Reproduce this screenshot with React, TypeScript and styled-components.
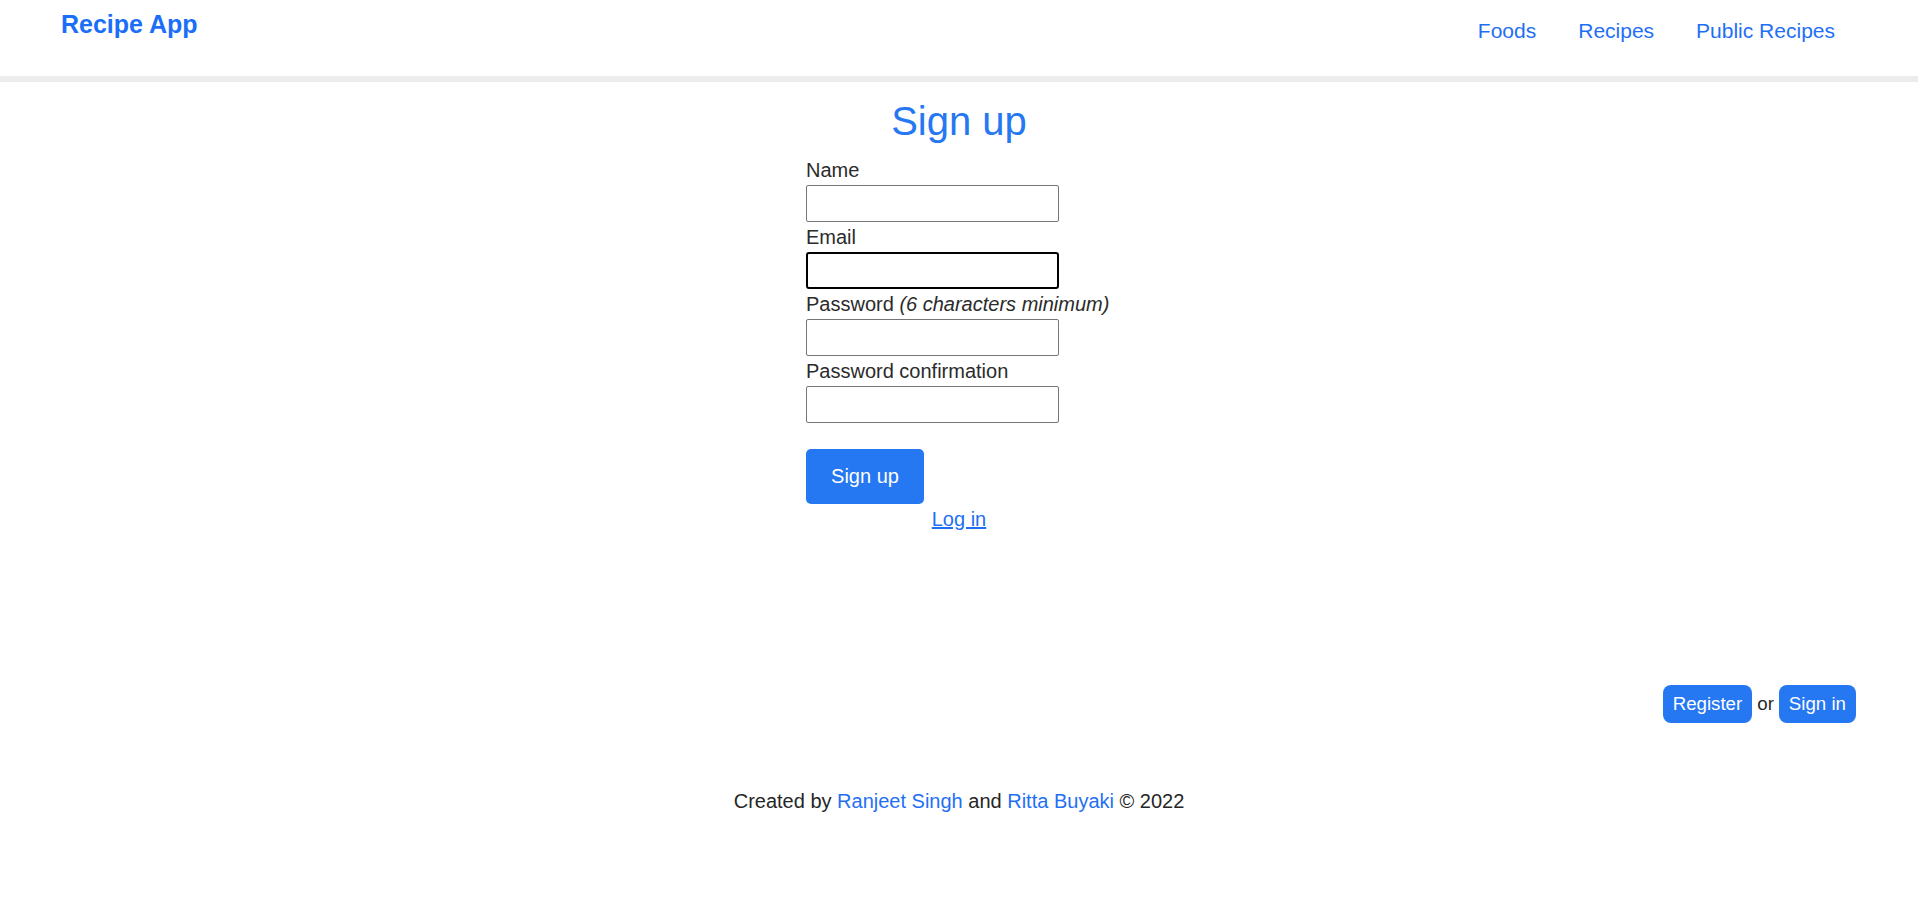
import React from "react";
import styled, { createGlobalStyle } from "styled-components";

const GlobalStyle = createGlobalStyle`
  html, body {
    margin: 0;
    padding: 0;
    background: #ffffff;
  }
  body {
    font-family: "Liberation Sans", Arial, sans-serif;
    color: #262626;
  }
  * { box-sizing: border-box; }
`;

const Header = styled.header`
  display: flex;
  justify-content: space-between;
  align-items: flex-start;
  height: 82px;
  padding: 0 83px 0 61px;
  border-bottom: 6px solid #ececec;
`;

const Logo = styled.a`
  margin-top: 10px;
  font-size: 25px;
  font-weight: 700;
  color: #1a6ef7;
  text-decoration: none;
  line-height: 29px;
`;

const Nav = styled.nav`
  display: flex;
  gap: 42px;
  margin-top: 19px;
`;

const NavLink = styled.a`
  font-size: 21px;
  line-height: 24px;
  color: #1f6ff5;
  text-decoration: none;
`;

const Main = styled.main`
  display: flex;
  flex-direction: column;
  align-items: center;
`;

const Title = styled.h2`
  margin: 16px 0 15px;
  font-size: 40px;
  line-height: 46px;
  font-weight: 400;
  color: #2577f2;
`;

const Form = styled.form`
  display: flex;
  flex-direction: column;
  align-items: flex-start;
  width: 306px;
`;

const Label = styled.label<{ $first?: boolean }>`
  display: block;
  font-size: 20px;
  line-height: 23px;
  color: #2b2b2b;
  margin-top: ${(p) => (p.$first ? "0" : "4px")};
  margin-bottom: 3px;
  white-space: nowrap;
`;

const Hint = styled.em`
  font-style: italic;
`;

const Input = styled.input<{ $focused?: boolean }>`
  width: 253px;
  height: 37px;
  margin: 0;
  padding: 0 6px;
  font-size: 18px;
  font-family: inherit;
  border: ${(p) => (p.$focused ? "2px solid #000" : "1px solid #767676")};
  border-radius: ${(p) => (p.$focused ? "3px" : "2px")};
  background: #fff;
  outline: none;
`;

const SubmitButton = styled.button`
  margin-top: 26px;
  width: 118px;
  height: 55px;
  border: none;
  border-radius: 5px;
  background: #2577f2;
  color: #fff;
  font-family: inherit;
  font-size: 20px;
  cursor: pointer;
`;

const LoginLink = styled.a`
  align-self: stretch;
  text-align: center;
  margin-top: 4px;
  font-size: 20px;
  line-height: 23px;
  color: #1f6ff5;
  text-decoration: underline;
`;

const AuthBar = styled.div`
  display: flex;
  justify-content: flex-end;
  align-items: center;
  gap: 5px;
  margin-top: 154px;
  padding-right: 62px;
`;

const AuthButton = styled.a`
  display: inline-block;
  padding: 8px 10px;
  height: 38px;
  border-radius: 8px;
  background: #2577f2;
  color: #fff;
  font-size: 18.7px;
  line-height: 22px;
  text-decoration: none;
`;

const OrText = styled.span`
  font-size: 18.7px;
  color: #262626;
`;

const Footer = styled.footer`
  margin-top: 67px;
  text-align: center;
  font-size: 20px;
  line-height: 23px;
  color: #262626;
`;

const FooterLink = styled.a`
  color: #1f6ff5;
  text-decoration: none;
`;

export default function App() {
  return (
    <>
      <GlobalStyle />
      <Header>
        <Logo href="#">Recipe App</Logo>
        <Nav>
          <NavLink href="#">Foods</NavLink>
          <NavLink href="#">Recipes</NavLink>
          <NavLink href="#">Public Recipes</NavLink>
        </Nav>
      </Header>
      <Main>
        <Title>Sign up</Title>
        <Form onSubmit={(e) => e.preventDefault()}>
          <Label $first htmlFor="name">Name</Label>
          <Input id="name" type="text" />
          <Label htmlFor="email">Email</Label>
          <Input id="email" type="email" $focused />
          <Label htmlFor="password">
            Password <Hint>(6 characters minimum)</Hint>
          </Label>
          <Input id="password" type="password" />
          <Label htmlFor="password_confirmation">Password confirmation</Label>
          <Input id="password_confirmation" type="password" />
          <SubmitButton type="submit">Sign up</SubmitButton>
          <LoginLink href="#">Log in</LoginLink>
        </Form>
      </Main>
      <AuthBar>
        <AuthButton href="#">Register</AuthButton>
        <OrText>or</OrText>
        <AuthButton href="#">Sign in</AuthButton>
      </AuthBar>
      <Footer>
        Created by <FooterLink href="#">Ranjeet Singh</FooterLink> and{" "}
        <FooterLink href="#">Ritta Buyaki</FooterLink> © 2022
      </Footer>
    </>
  );
}
